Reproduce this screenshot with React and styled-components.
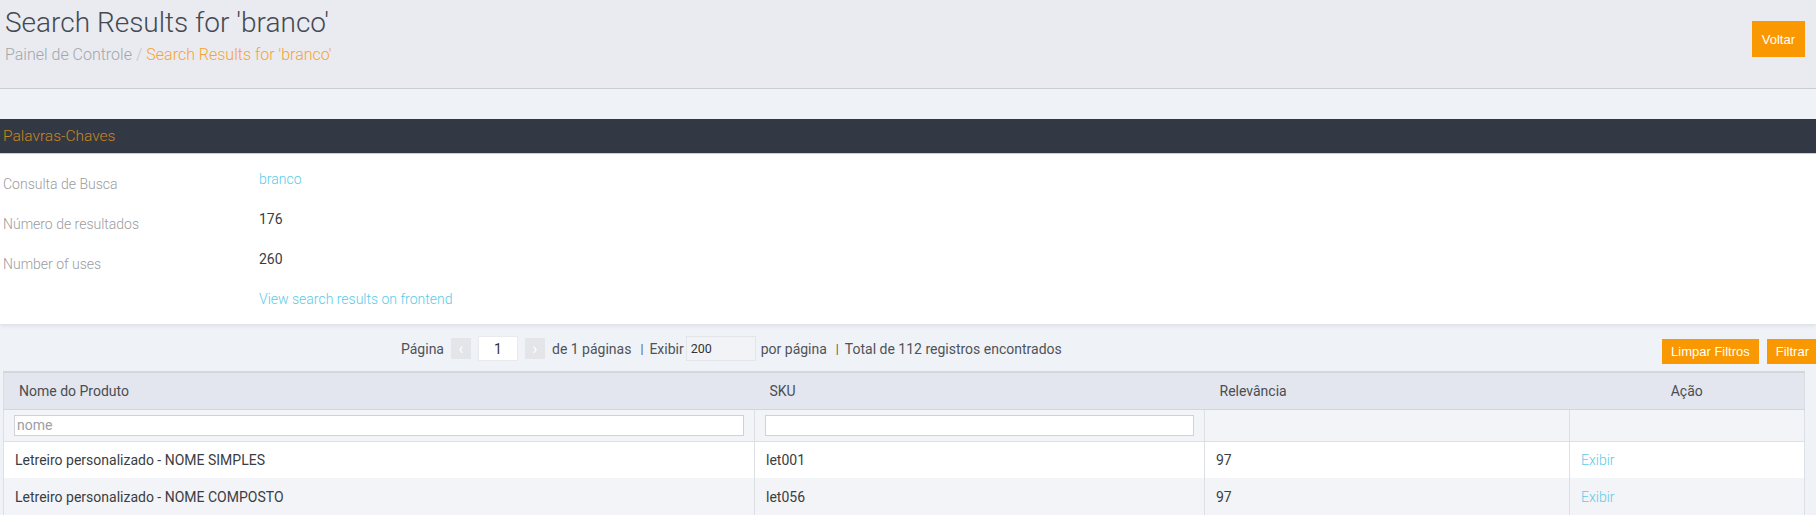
import React from 'react'
import styled, { createGlobalStyle } from 'styled-components'

const GlobalStyle = createGlobalStyle`
  html, body {
    margin: 0;
    padding: 0;
    background: #eff2f7;
    overflow-x: hidden;
  }
  body {
    font-family: Roboto, "Noto Sans", sans-serif;
    color: #333;
  }
  * { box-sizing: border-box; }
`;

const rows = [
  { name: 'Letreiro personalizado - NOME SIMPLES', sku: 'let001', relevance: 97 },
  { name: 'Letreiro personalizado - NOME COMPOSTO', sku: 'let056', relevance: 97 },
];

export default function App() {
  return <Page>
    <GlobalStyle />
    <Header>
      <div>
        <Title>Search Results for 'branco'</Title>
        <Breadcrumb>
          <span>Painel de Controle</span>
          <Sep>/</Sep>
          <Current>Search Results for 'branco'</Current>
        </Breadcrumb>
      </div>
      <OrangeButton $big>Voltar</OrangeButton>
    </Header>

    <Panel>
      <PanelHead>Palavras-Chaves</PanelHead>
      <PanelBody>
        <InfoRow>
          <Label>Consulta de Busca</Label>
          <Value $link>branco</Value>
        </InfoRow>
        <InfoRow>
          <Label>Número de resultados</Label>
          <Value>176</Value>
        </InfoRow>
        <InfoRow>
          <Label>Number of uses</Label>
          <Value>260</Value>
        </InfoRow>
        <InfoRow>
          <Label />
          <Value $link>View search results on frontend</Value>
        </InfoRow>
      </PanelBody>
    </Panel>

    <Toolbar>
      <Pager>
        <span>Página</span>
        <NavBox>‹</NavBox>
        <PageInput defaultValue="1" />
        <NavBox>›</NavBox>
        <span>de 1 páginas</span>
        <Bar>|</Bar>
        <span>Exibir</span>
        <LimitInput defaultValue="200" />
        <span>por página</span>
        <Bar>|</Bar>
        <span>Total de 112 registros encontrados</span>
      </Pager>
      <Actions>
        <OrangeButton>Limpar Filtros</OrangeButton>
        <OrangeButton>Filtrar</OrangeButton>
      </Actions>
    </Toolbar>

    <Grid>
      <colgroup>
        <col style={{ width: 751 }} />
        <col style={{ width: 450 }} />
        <col style={{ width: 365 }} />
        <col style={{ width: 235 }} />
      </colgroup>
      <thead>
        <tr>
          <Th>Nome do Produto</Th>
          <Th>SKU</Th>
          <Th>Relevância</Th>
          <Th $center>Ação</Th>
        </tr>
        <FilterRow>
          <td><FilterInput placeholder="nome" /></td>
          <td><FilterInput /></td>
          <td />
          <td />
        </FilterRow>
      </thead>
      <tbody>
        {rows.map((r, i) => (
          <DataRow key={r.sku} $odd={i % 2 === 1}>
            <td>{r.name}</td>
            <td>{r.sku}</td>
            <td>{r.relevance}</td>
            <td><Link>Exibir</Link></td>
          </DataRow>
        ))}
      </tbody>
    </Grid>
  </Page>
}

const Page = styled.div`
  min-height: 515px;
`;

const Header = styled.header`
  display: flex;
  justify-content: space-between;
  align-items: flex-start;
  height: 89px;
  padding: 6px 11px 0 5px;
  background: #e9ebf0;
  border-bottom: 1px solid #c9ccd1;
`;

const Title = styled.h1`
  margin: 0;
  font-size: 28px;
  line-height: 34px;
  font-weight: 300;
  color: #454a52;
`;

const Breadcrumb = styled.div`
  margin-top: 5px;
  font-size: 16px;
  line-height: 20px;
  font-weight: 300;
  color: #a3a6ab;
`;

const Sep = styled.span`
  margin: 0 4px;
  color: #c3c6cb;
`;

const Current = styled.span`
  color: #f8a231;
`;

const OrangeButton = styled.button`
  border: 0;
  border-radius: 0;
  background: #f99800;
  color: #fff;
  font-family: "Liberation Sans", Arial, sans-serif;
  font-size: 13px;
  padding: 0 ${p => (p.$big ? '10px' : '9px')};
  height: ${p => (p.$big ? '36px' : '25px')};
  margin-top: ${p => (p.$big ? '15px' : '0')};
  cursor: pointer;
`;

const Panel = styled.section`
  margin-top: 30px;
  background: #fff;
  box-shadow: 0 2px 4px rgba(0, 0, 0, 0.08);
`;

const PanelHead = styled.div`
  height: 35px;
  padding: 0 3px;
  display: flex;
  align-items: center;
  background: #333944;
  color: #c9861f;
  font-size: 15.5px;
  font-weight: 300;
  border-bottom: 1px solid #c9ccd1;
`;

const PanelBody = styled.div`
  padding-top: 15px;
`;

const InfoRow = styled.div`
  display: grid;
  grid-template-columns: 259px 1fr;
  height: 40px;
  padding-left: 3px;
  &:last-child { height: 35px; }
`;

const Label = styled.div`
  padding-top: 5px;
  font-size: 14px;
  line-height: 20px;
  font-weight: 300;
  color: #9a9ca0;
`;

const Value = styled.div`
  margin-left: -3px;
  font-size: 14px;
  line-height: 20px;
  font-weight: ${p => (p.$link ? 300 : 400)};
  color: ${p => (p.$link ? '#5ccbe8' : '#3a3d42')};
`;

const Toolbar = styled.div`
  display: flex;
  align-items: flex-start;
  height: 47px;
  padding-top: 12px;
  margin-right: -2px;
`;

const Pager = styled.div`
  display: flex;
  align-items: center;
  gap: 5px;
  height: 25px;
  margin-left: 401px;
  font-size: 14px;
  color: #4f5257;
`;

const NavBox = styled.span`
  display: inline-flex;
  align-items: center;
  justify-content: center;
  width: 20px;
  height: 21px;
  margin: 0 2px;
  background: #e4e5e8;
  color: #fff;
  font-size: 16px;
`;

const PageInput = styled.input`
  width: 40px;
  height: 25px;
  border: 1px solid #e8eaee;
  background: #fff;
  text-align: center;
  font-family: Roboto, sans-serif;
  font-size: 14px;
  color: #333;
  outline: none;
`;

const LimitInput = styled.input`
  width: 70px;
  height: 25px;
  margin: 0 0 0 -3px;
  padding: 0 4px;
  border: 1px solid #e2e5ea;
  background: #f1f3f7;
  font-family: Roboto, sans-serif;
  font-size: 12.5px;
  color: #333;
  outline: none;
`;

const Bar = styled.span`
  margin: 0 1px 0 4px;
  font-size: 12px;
`;

const Actions = styled.div`
  display: flex;
  gap: 8px;
  margin-left: auto;
  margin-top: 3px;
`;

const Grid = styled.table`
  width: 1801px;
  margin-left: 3px;
  table-layout: fixed;
  border-collapse: collapse;
  border-top: 2px solid #d3d6dc;
  border-left: 1px solid #dadde2;
  border-right: 1px solid #dadde2;
  font-size: 14px;

  td {
    border-left: 1px solid #dcdfe4;
    border-right: 1px solid #dcdfe4;
  }
`;

const Th = styled.th`
  height: 37px;
  padding: 0 15px;
  background: #e3e6ee;
  text-align: ${p => (p.$center ? 'center' : 'left')};
  font-weight: 400;
  color: #4a4d52;
  border-bottom: 1px solid #d3d6dc;
`;

const FilterRow = styled.tr`
  background: #f3f4f8;
  td {
    height: 32px;
    padding: 0 10px 0 10px;
    border-bottom: 1px solid #dcdfe4;
  }
`;

const FilterInput = styled.input`
  display: block;
  width: 100%;
  height: 21px;
  padding: 0 2px;
  border: 1px solid #cfd2d6;
  background: #fff;
  font-family: Roboto, sans-serif;
  font-size: 14px;
  outline: none;
  &::placeholder { color: #9c9ea2; }
`;

const DataRow = styled.tr`
  background: ${p => (p.$odd ? '#f3f4f8' : '#fff')};
  td {
    height: 37px;
    padding: 0 11px;
    font-size: 14px;
    font-weight: 400;
    color: #3a3d42;
  }
`;

const Link = styled.span`
  color: #5ccbe8;
  font-weight: 300;
`;
